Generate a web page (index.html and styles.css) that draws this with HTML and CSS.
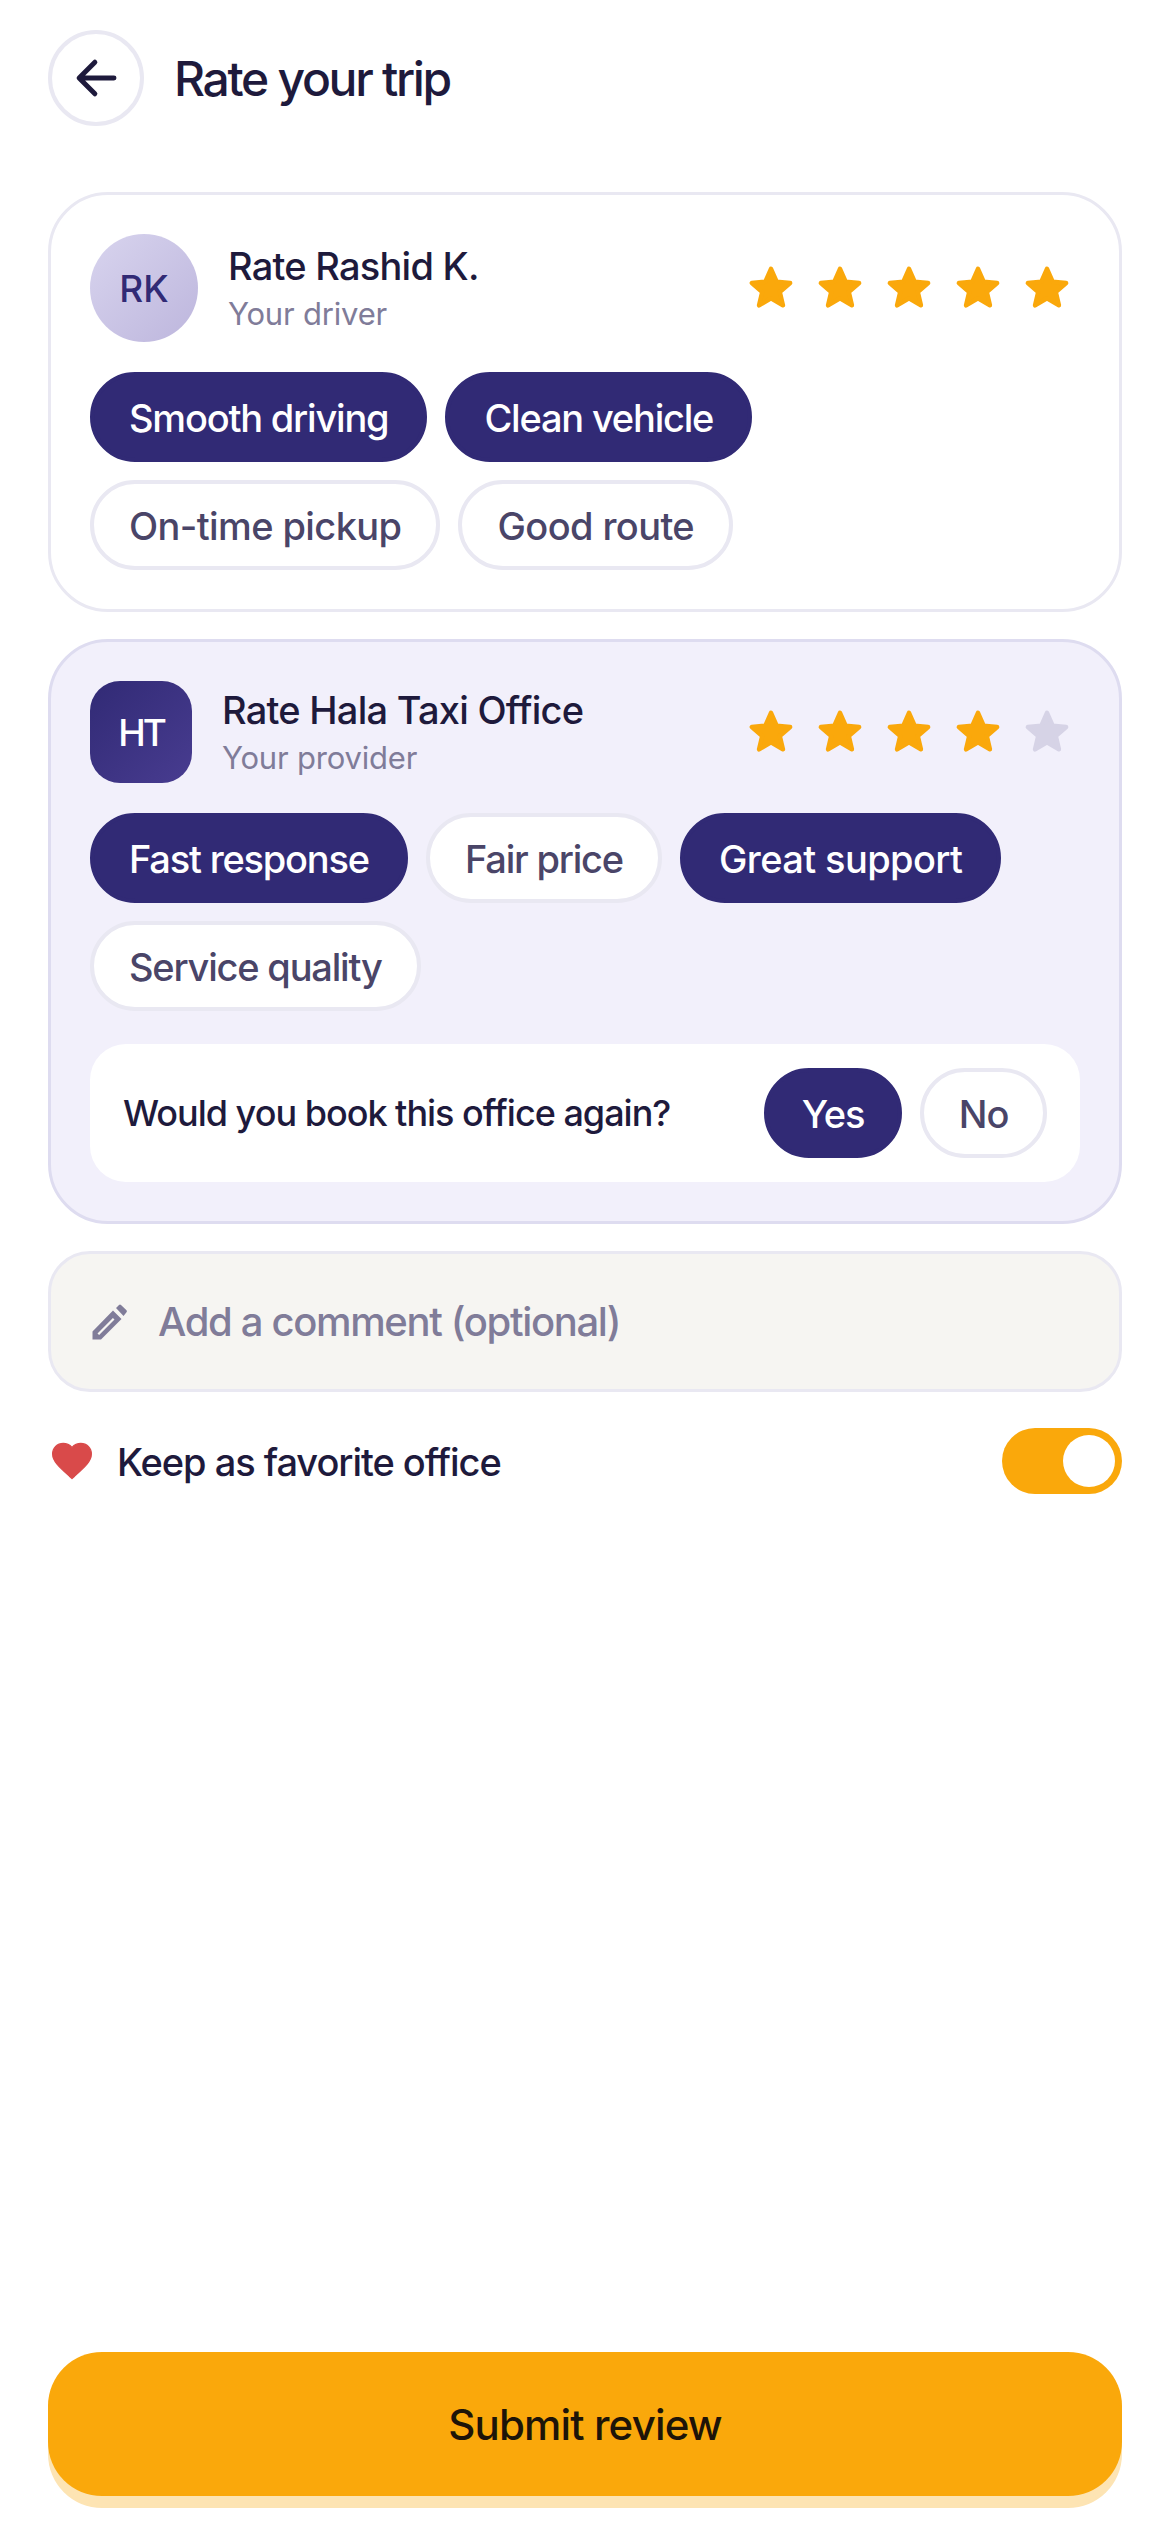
FILE: index.html
```html
<!DOCTYPE html>
<html>
<head>
<meta charset="utf-8"/>
<meta name="viewport" content="width=device-width, initial-scale=1.0">
<title>Rate your trip</title>
<link rel="stylesheet" href="styles.css">
</head>
<body>
<svg class="defs" width="0" height="0">
	<symbol id="star" viewBox="0 0 24 24">
		<path d="M12 3.500l2.500 5.700 6 .6-4.600 4 1.400 5.900L12 16.600l-5.300 3.100 1.400-5.900-4.600-4 6-.6z" fill="currentColor" stroke="currentColor" stroke-width="2" stroke-linejoin="round"/>
	</symbol>
</svg>

<header class="top">
	<button class="back">
		<svg viewBox="0 0 24 24" width="54" height="54"><path d="M20 12H5M11.5 5L4.5 12l7 7" fill="none" stroke="#1e1a3c" stroke-width="2.2" stroke-linecap="round" stroke-linejoin="round"/></svg>
	</button>
	<h1>Rate your trip</h1>
</header>

<section class="card">
	<div class="rate-head">
		<div class="avatar round">RK</div>
		<div class="who">
			<div class="name">Rate Rashid K.</div>
			<div class="role">Your driver</div>
		</div>
		<div class="stars">
			<svg><use href="#star"/></svg>
			<svg><use href="#star"/></svg>
			<svg><use href="#star"/></svg>
			<svg><use href="#star"/></svg>
			<svg><use href="#star"/></svg>
		</div>
	</div>
	<div class="chips">
		<span class="chip on">Smooth driving</span>
		<span class="chip on">Clean vehicle</span>
		<span class="chip wide">On-time pickup</span>
		<span class="chip wide">Good route</span>
	</div>
</section>

<section class="card office">
	<div class="rate-head">
		<div class="avatar square">HT</div>
		<div class="who">
			<div class="name">Rate Hala Taxi Office</div>
			<div class="role">Your provider</div>
		</div>
		<div class="stars">
			<svg><use href="#star"/></svg>
			<svg><use href="#star"/></svg>
			<svg><use href="#star"/></svg>
			<svg><use href="#star"/></svg>
			<svg class="off"><use href="#star"/></svg>
		</div>
	</div>
	<div class="chips">
		<span class="chip on">Fast response</span>
		<span class="chip">Fair price</span>
		<span class="chip on wide">Great support</span>
		<span class="chip">Service quality</span>
	</div>
	<div class="again">
		<span class="again-q">Would you book this office again?</span>
		<span class="chip on yes">Yes</span>
		<span class="chip no">No</span>
	</div>
</section>

<div class="comment">
	<svg viewBox="10 6 40 40" width="40" height="40"><path fill-rule="evenodd" d="M12.500 35.500L33 14.500l8.500 8.500L21 43.500h-8.500zM17.500 37.500l1.600 1.600L34.500 23.500l-1.600-1.600zM36 12l3-3a1.500 1.500 0 0 1 2 0l5.500 5.200a1.500 1.500 0 0 1 0 2L43.500 20z" fill="#807c99"/></svg>
	<span>Add a comment (optional)</span>
</div>

<div class="fav">
	<svg viewBox="0 0 24 24" width="48" height="48"><path d="M12 20.800l-1.300-1.200C5.600 15 2.300 12.100 2.300 8.500 2.300 5.500 4.600 3.200 7.600 3.200c1.700 0 3.300.8 4.400 2 1.100-1.200 2.700-2 4.400-2 3 0 5.300 2.300 5.300 5.300 0 3.600-3.300 6.500-8.400 11.100z" fill="#d94a4a" stroke="#d94a4a" stroke-width=".6" stroke-linejoin="round"/></svg>
	<span class="fav-label">Keep as favorite office</span>
	<div class="toggle"><div class="knob"></div></div>
</div>

<button class="submit">Submit review</button>

</body>
</html>
```

FILE: styles.css
```css
* {
	box-sizing: border-box;
}
html, body {
	height: 100%;
}
body {
	margin: 0;
	height: 2532px;
	padding: 30px 48px 36px;
	display: flex;
	flex-direction: column;
	background: white;
	color: #1e1a3c;
	font-family: Inter, "Liberation Sans", sans-serif;
}
.defs {
	position: absolute;
}
/* header */
.top {
	display: flex;
	align-items: center;
	gap: 30px;
	margin-bottom: 66px;
}
.back {
	width: 96px;
	height: 96px;
	padding: 0;
	display: flex;
	align-items: center;
	justify-content: center;
	background: white;
	border: 4.5px solid #e9e8f2;
	border-radius: 50%;
}
h1 {
	margin: 0;
	font-size: 48px;
	font-weight: 500;
	letter-spacing: -2.3px;
}
/* cards */
.card {
	padding: 39px;
	margin-bottom: 27px;
	border: 3px solid #e9e8f2;
	border-radius: 60px;
}
.office {
	background: #f2f0fb;
	border-color: #dedcf0;
}
.rate-head {
	display: flex;
	align-items: center;
	margin-bottom: 30px;
}
.avatar {
	display: flex;
	align-items: center;
	justify-content: center;
	flex: none;
	font-size: 37px;
	font-weight: 500;
}
.round {
	width: 108px;
	height: 108px;
	margin-right: 30px;
	border-radius: 50%;
	background: linear-gradient(135deg, #d8d4ee, #bdb6dd);
	color: #312a75;
}
.square {
	width: 102px;
	height: 102px;
	margin-right: 30px;
	border-radius: 30px;
	background: linear-gradient(135deg, #312a75, #483c90);
	color: white;
	letter-spacing: -3px;
}
.who {
	flex: 1;
}
.name {
	font-size: 38px;
	font-weight: 500;
	line-height: 50px;
	letter-spacing: -.75px;
}
.role {
	padding-top: 2px;
	font-size: 31px;
	line-height: 42px;
	letter-spacing: -.2px;
	color: #807c99;
}
.stars {
	display: flex;
	gap: 15px;
	margin-right: 6px;
	color: #faa80b;
}
.stars svg {
	width: 54px;
	height: 54px;
}
.stars .off {
	color: #d6d3e6;
}
.chips {
	display: flex;
	flex-wrap: wrap;
	gap: 18px;
}
.chip {
	display: flex;
	align-items: center;
	justify-content: center;
	height: 90px;
	padding: 2px 35px 0;
	border: 4.5px solid #e9e8f2;
	border-radius: 45px;
	background: white;
	color: #4a4568;
	font-size: 38px;
	font-weight: 500;
	letter-spacing: -1.2px;
}
.chip.wide {
	letter-spacing: -.6px;
}
.chip.on {
	border-color: #312a75;
	background: #312a75;
	color: white;
}
/* book again */
.again {
	display: flex;
	align-items: center;
	gap: 18px;
	height: 138px;
	margin-top: 33px;
	padding: 0 33px;
	border-radius: 36px;
	background: white;
}
.again-q {
	flex: 1;
	font-size: 36px;
	font-weight: 500;
	letter-spacing: -1px;
}
.yes {
	width: 138px;
	padding: 2px 0 0;
}
.no {
	width: 127px;
	padding: 2px 0 0;
}
/* comment */
.comment {
	display: flex;
	align-items: center;
	gap: 28px;
	height: 141px;
	padding: 0 36px 0 39px;
	border: 3px solid #e9e8f2;
	border-radius: 42px;
	background: #f6f5f2;
	color: #807c99;
	font-size: 40px;
	font-weight: 500;
	letter-spacing: -1.35px;
}
/* favorite */
.fav {
	display: flex;
	align-items: center;
	margin-top: 36px;
}
.fav svg {
	margin-right: 21px;
}
.fav-label {
	flex: 1;
	padding-top: 2px;
	font-size: 38px;
	font-weight: 500;
	letter-spacing: -1.05px;
}
.toggle {
	display: flex;
	align-items: center;
	justify-content: flex-end;
	width: 120px;
	height: 66px;
	padding-right: 7px;
	border-radius: 33px;
	background: #faa80b;
}
.knob {
	width: 52px;
	height: 52px;
	border-radius: 50%;
	background: white;
}
/* submit */
.submit {
	height: 144px;
	margin-top: auto;
	border: none;
	border-radius: 54px;
	background: #faa80b;
	box-shadow: 0 12px 0 #fde4b3;
	color: #1e1408;
	font-family: inherit;
	font-size: 42px;
	font-weight: 500;
	letter-spacing: -.85px;
}
```
